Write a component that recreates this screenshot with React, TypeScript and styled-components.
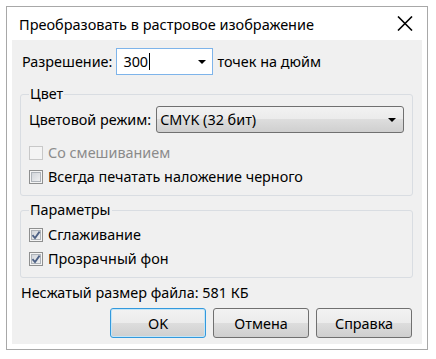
import React from "react";
import styled, { createGlobalStyle, css } from "styled-components";

const GlobalStyle = createGlobalStyle`
  html, body { margin: 0; padding: 0; background: #ffffff; }
  body {
    font-family: "Noto Sans", "Open Sans", sans-serif;
    font-size: 14.4px;
    color: #000;
  }
  * { box-sizing: border-box; }
`;

const Window = styled.div`
  margin: 6px 0 0 6px;
  width: 422px;
  border: 1px solid #a8a8a8;
  background: #ffffff;
  padding: 0 5px 5px;
`;

const TitleBar = styled.div`
  height: 33px;
  display: flex;
  align-items: center;
  justify-content: space-between;
  padding: 0 9px 0 7px;
`;

const Title = styled.div`
  font-size: 14.5px;
  line-height: 20px;
  padding-top: 1px;
`;

const CloseBtn = styled.div`
  width: 16px;
  height: 16px;
  display: flex;
  align-items: center;
  justify-content: center;
`;

const Body = styled.div`
  background: #f0f0f0;
  height: 304px;
  padding: 8px 9px 0 8px;
  display: flex;
  flex-direction: column;
`;

const Row = styled.div`
  display: flex;
  align-items: center;
  gap: 5px;
`;

const Label = styled.span<{ $disabled?: boolean }>`
  line-height: 18px;
  white-space: nowrap;
  color: ${(p) => (p.$disabled ? "#8b8b8b" : "#000")};
`;

const ResRow = styled(Row)`
  padding-left: 2px;
  height: 27px;
  gap: 4px;
`;

const EditCombo = styled.div`
  width: 97px;
  height: 27px;
  background: #fff;
  border: 1px solid #7eb4ea;
  display: flex;
  align-items: center;
  padding: 0 6px 0 6px;
  justify-content: space-between;
`;

const Caret = styled.span`
  display: inline-block;
  width: 1px;
  height: 17px;
  background: #000;
  margin-left: 1px;
`;

const EditText = styled.span`
  display: flex;
  align-items: center;
  line-height: 18px;
`;

const Arrow = styled.span`
  width: 0;
  height: 0;
  border-left: 4px solid transparent;
  border-right: 4px solid transparent;
  border-top: 4px solid #000;
`;

const Group = styled.fieldset<{ $gap: number }>`
  margin: ${(p) => p.$gap}px 0 0 0;
  padding: 0 8px 6px 8px;
  border: 1px solid #d9dde2;
  border-radius: 3px;
  min-width: 0;
`;

const Legend = styled.legend`
  padding: 0 1px;
  line-height: 18px;
`;

const ComboRow = styled(Row)`
  margin-top: 3px;
  height: 27px;
  gap: 5px;
`;

const Combo = styled.div`
  flex: 1;
  height: 27px;
  border: 1px solid #707070;
  border-radius: 3px;
  background: linear-gradient(#f2f2f2 0%, #ebebeb 50%, #dddddd 50%, #cfcfcf 100%);
  display: flex;
  align-items: center;
  justify-content: space-between;
  padding: 0 7px 0 3px;
`;

const CheckRow = styled.div<{ $top: number }>`
  display: flex;
  align-items: center;
  height: 24px;
  gap: 5px;
  margin-top: ${(p) => p.$top}px;
`;

const Box = styled.span<{ $disabled?: boolean }>`
  flex: none;
  width: 14px;
  height: 14px;
  border: 1px solid ${(p) => (p.$disabled ? "#c8c8c8" : "#8e8f8f")};
  background: #f4f4f4;
  display: flex;
  align-items: center;
  justify-content: center;
  ${(p) =>
    !p.$disabled &&
    css`
      box-shadow: inset 0 0 0 1px #f4f4f4, inset 0 0 0 2px #aeb3b9;
      background: linear-gradient(135deg, #cbcfd5 0%, #f6f6f6 100%);
    `}
`;

const Status = styled.div`
  margin-top: 6px;
  padding-left: 1px;
  line-height: 18px;
`;

const Buttons = styled.div`
  display: flex;
  justify-content: flex-end;
  gap: 7px;
  margin-top: 6px;
  padding-right: 1px;
`;

const Button = styled.button<{ $default?: boolean }>`
  width: 96px;
  height: 30px;
  font-family: inherit;
  font-size: 14.4px;
  color: #000;
  border: 1px solid #707070;
  border-radius: 3px;
  background: linear-gradient(#f2f2f2 0%, #ebebeb 50%, #dddddd 50%, #cfcfcf 100%);
  padding: 0;
  ${(p) =>
    p.$default &&
    css`
      border-color: #3399dd;
      box-shadow: inset 0 0 0 1px #c4e5f6;
    `}
`;

function CheckMark() {
  return (
    <svg width="10" height="10" viewBox="0 0 10 10">
      <path d="M1.5 5.2 L4 8 L8.6 1.6" fill="none" stroke="#4d6185" strokeWidth="1.8" />
    </svg>
  );
}

function Check({ label, checked, disabled, top = 0 }: { label: string; checked?: boolean; disabled?: boolean; top?: number }) {
  return (
    <CheckRow $top={top}>
      <Box $disabled={disabled}>{checked && <CheckMark />}</Box>
      <Label $disabled={disabled}>{label}</Label>
    </CheckRow>
  );
}

export default function App() {
  return (
    <>
      <GlobalStyle />
      <Window>
        <TitleBar>
          <Title>Преобразовать в растровое изображение</Title>
          <CloseBtn>
            <svg width="16" height="15" viewBox="0 0 16 15">
              <path d="M1 0.5 L15 14.5 M15 0.5 L1 14.5" stroke="#000" strokeWidth="1.6" />
            </svg>
          </CloseBtn>
        </TitleBar>
        <Body>
          <ResRow>
            <Label>Разрешение:</Label>
            <EditCombo>
              <EditText>
                300
                <Caret />
              </EditText>
              <Arrow />
            </EditCombo>
            <Label>точек на дюйм</Label>
          </ResRow>
          <Group $gap={10}>
            <Legend>Цвет</Legend>
            <ComboRow>
              <Label>Цветовой режим:</Label>
              <Combo>
                <Label>CMYK (32 бит)</Label>
                <Arrow />
              </Combo>
            </ComboRow>
            <Check label="Со смешиванием" disabled top={8} />
            <Check label="Всегда печатать наложение черного" />
          </Group>
          <Group $gap={5}>
            <Legend>Параметры</Legend>
            <Check label="Сглаживание" checked top={4} />
            <Check label="Прозрачный фон" checked />
          </Group>
          <Status>Несжатый размер файла: 581 КБ</Status>
          <Buttons>
            <Button $default>OK</Button>
            <Button>Отмена</Button>
            <Button>Справка</Button>
          </Buttons>
        </Body>
      </Window>
    </>
  );
}
